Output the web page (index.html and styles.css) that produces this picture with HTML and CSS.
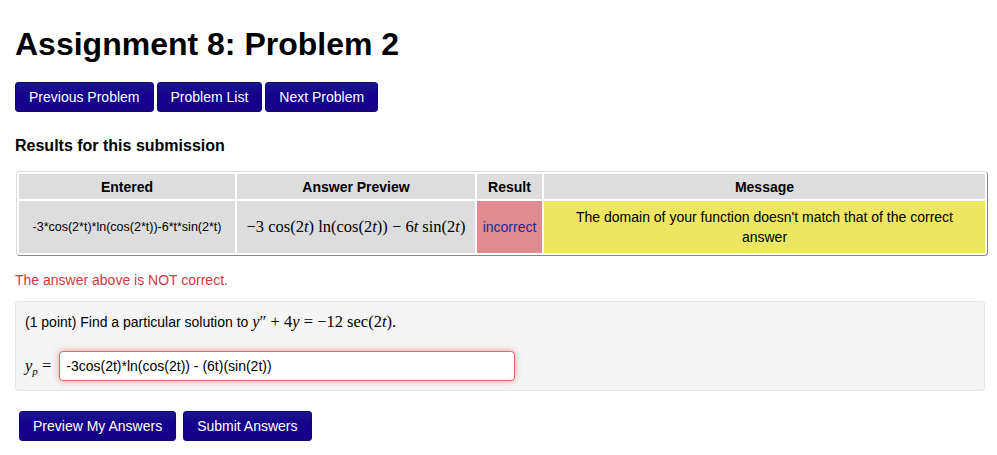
FILE: index.html
```html
<!DOCTYPE html>
<html lang="en">
<head>
<meta charset="utf-8">
<title>Assignment 8: Problem 2</title>
<link rel="stylesheet" href="styles.css">
</head>
<body>
<h1 class="title">Assignment 8: Problem 2</h1>
<nav class="nav">
  <a class="btn">Previous Problem</a>
  <a class="btn">Problem List</a>
  <a class="btn">Next Problem</a>
</nav>
<h2 class="subtitle">Results for this submission</h2>
<table class="results">
  <colgroup>
    <col class="c1"><col class="c2"><col class="c3"><col class="c4">
  </colgroup>
  <thead>
    <tr><th>Entered</th><th>Answer Preview</th><th>Result</th><th>Message</th></tr>
  </thead>
  <tbody>
    <tr>
      <td class="entered">-3*cos(2*t)*ln(cos(2*t))-6*t*sin(2*t)</td>
      <td class="math preview">−3 cos(2<i>t</i>) ln(cos(2<i>t</i>)) − 6<i>t</i> sin(2<i>t</i>)</td>
      <td class="bad">incorrect</td>
      <td class="msg">The domain of your function doesn't match that of the correct answer</td>
    </tr>
  </tbody>
</table>
<p class="error">The answer above is NOT correct.</p>
<section class="problem">
  <p class="statement">(1 point) Find a particular solution to <span class="math eq"><i>y</i>″ + 4<i>y</i> = −12 sec(2<i>t</i>).</span></p>
  <div class="answer">
    <span class="math label"><i>y<sub>p</sub></i> =</span>
    <input class="field" type="text" value="-3cos(2t)*ln(cos(2t)) - (6t)(sin(2t))">
  </div>
</section>
<div class="actions">
  <a class="btn">Preview My Answers</a>
  <a class="btn">Submit Answers</a>
</div>
</body>
</html>
```
FILE: styles.css
```css
* { box-sizing: border-box; }
html, body { margin: 0; padding: 0; }
body {
  width: 997px;
  height: 455px;
  overflow: hidden;
  background: #fff;
  color: #000;
  font-family: "Liberation Sans", Arial, sans-serif;
  padding: 24px 12px 0 15px;
}
.title {
  margin: 0;
  font-size: 32px;
  line-height: 40px;
  font-weight: 700;
}
.nav {
  display: flex;
  gap: 3px;
  margin-top: 18px;
}
.btn {
  display: block;
  height: 30px;
  padding: 0 13px;
  font-size: 14px;
  line-height: 29px;
  color: #fff;
  border: 1px solid #0f0a6e;
  border-radius: 3px;
  background: linear-gradient(#1c1590, #15008c 45%, #18008a);
}
.subtitle {
  margin: 25px 0 0;
  font-size: 16px;
  line-height: 18px;
  font-weight: 700;
}
.results {
  margin: 16px 0 0 1px;
  width: 969px;
  height: 84px;
  table-layout: fixed;
  border-collapse: separate;
  border-spacing: 2px;
  border: 1px solid;
  border-color: #ddd #888 #888 #ddd;
  border-radius: 4px;
  font-size: 14px;
}
.c1 { width: 216px; }
.c2 { width: 238px; }
.c3 { width: 65px; }
.c4 { width: 441px; }
th, td {
  padding: 0;
  text-align: center;
  background: #ddd;
}
th {
  height: 25px;
  font-weight: 700;
}
td { height: 52px; }
.entered { font-size: 12.5px; white-space: nowrap; }
.math { font-family: "Liberation Serif", "Times New Roman", serif; }
.preview { font-size: 16.5px; white-space: nowrap; }
.bad { background: #e08b8f; color: #1a2a9a; }
.msg { background: #ede660; line-height: 20px; padding: 0 20px; }
.error {
  margin: 15px 0 0;
  font-size: 14px;
  line-height: 18px;
  color: #d0393f;
}
.problem {
  margin-top: 12px;
  height: 90px;
  padding: 10px 9px 0;
  background: #f5f5f5;
  border: 1px solid #e6e6e6;
  border-radius: 3px;
  font-size: 14px;
}
.statement {
  margin: 0;
  line-height: 20px;
}
.eq { font-size: 16.5px; }
.answer {
  display: flex;
  align-items: center;
  gap: 8px;
  margin-top: 19px;
}
.label { font-size: 16.5px; }
.label sub { font-size: 11px; line-height: 0; }
.field {
  width: 456px;
  height: 30px;
  padding: 0 6px;
  font: 14px/20px "Liberation Sans", Arial, sans-serif;
  color: #000;
  background: #fff;
  border: 1px solid #dd6a6a;
  border-radius: 4px;
  box-shadow: 0 0 6px rgba(220, 80, 80, .55);
  outline: none;
}
.actions {
  display: flex;
  gap: 7px;
  margin: 20px 0 0 4px;
}
```
